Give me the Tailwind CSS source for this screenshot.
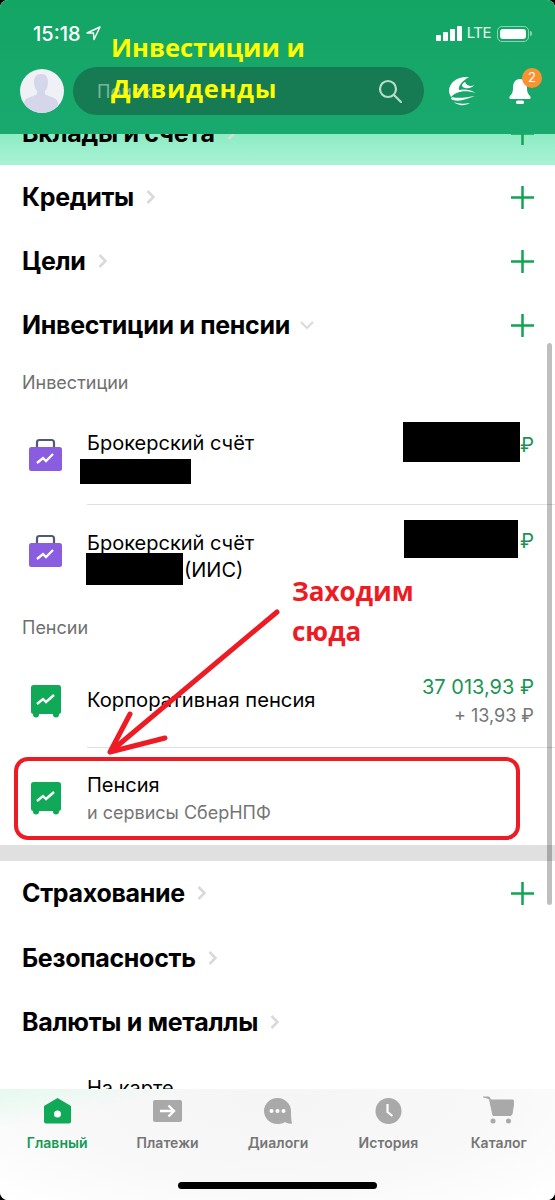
<!DOCTYPE html>
<html lang="ru">
  <head>
    <meta charset="UTF-8" />
    <meta name="viewport" content="width=device-width, initial-scale=1.0" />
    <script src="https://cdn.jsdelivr.net/npm/@tailwindcss/browser@4"></script>
    <title>Инвестиции и пенсии</title>
  </head>
  <body class="bg-black font-[Inter,sans-serif]">
    <main class="relative w-[555px] h-[1200px] overflow-hidden rounded-[8px] bg-white text-black">
      <!-- header -->
      <header class="h-[134px] bg-gradient-to-b from-[#13a564] to-[#19a96f] px-[20px] relative z-10">
        <div class="flex items-center h-[67px]">
          <span class="text-white text-[20px] ml-[13px] font-medium">15:18</span>
          <svg class="ml-[5px]" width="15" height="15" viewBox="0 0 15 15" fill="none" stroke="#fff" stroke-width="1.4" stroke-linejoin="round"><path d="M14 1 1 7h6.500L8 13.500z" /></svg>
          <div class="ml-auto flex items-center">
            <div class="flex items-end gap-[2px] h-[15px]">
              <i class="block w-[5px] h-[6px] rounded-[1px] bg-white"></i>
              <i class="block w-[5px] h-[9px] rounded-[1px] bg-white"></i>
              <i class="block w-[5px] h-[12px] rounded-[1px] bg-white"></i>
              <i class="block w-[5px] h-[15px] rounded-[1px] bg-white"></i>
            </div>
            <span class="text-white/90 text-[15px] ml-[5px] tracking-[-0.5px]">LTE</span>
            <div class="ml-[6px] w-[32px] h-[16px] border border-white/50 rounded-[5px] p-[2px]">
              <div class="w-full h-full bg-white rounded-[3px]"></div>
            </div>
            <i class="block w-[2px] h-[5px] ml-[1px] mr-[3px] rounded-r bg-white/50"></i>
          </div>
        </div>
        <div class="flex items-center h-[48px]">
          <div class="w-[44px] h-[44px] rounded-full bg-[#f0f0f7] overflow-hidden shrink-0">
            <svg width="44" height="44" viewBox="0 0 44 44" fill="#d6d6eb"><path d="M21 5c-5 0-7 3-7 8 0 4 1 7 3 9v3c-2 2-8 3-11 5-2 2-3 6-3 14h36c0-8-1-12-3-14-3-2-9-3-11-5v-3c2-2 3-5 3-9 0-5-2-8-7-8z" /></svg>
          </div>
          <div class="ml-[9px] w-[351px] h-[48px] rounded-full bg-[#167b53] flex items-center pl-[24px] pr-[22px]">
            <span class="text-white/45 text-[18px]">Поиск</span>
            <svg class="ml-auto" width="24" height="24" viewBox="0 0 24 24" fill="none" stroke="#b9dccd" stroke-width="2.200" stroke-linecap="round"><circle cx="10" cy="10" r="8" /><path d="m16 16 7 7" /></svg>
          </div>
          <svg class="ml-[24px]" width="28" height="30" viewBox="0 0 28 30" fill="#fff"><path d="M21 1C10 0 1 6 1 15c0 2 1 4 2 6 4-5 13-8 25-4-6-4-13-4-17-3-1-4 3-9 10-13z" /><path d="M17 6c-4 2-4 5 0 6s8-1 9-3c-3 2-7 1-9-3z" /><path d="M3 23c5 3 11 2 24-3-7 1-17 3-23 1z" /><path d="M6 26c4 4 11 4 16 1-6 1-12 1-16-1z" /></svg>
          <svg class="ml-[32px]" width="24" height="26" viewBox="0 0 24 26" fill="#fff"><path d="M12 1c-5 0-7 4-7 9 0 4-1 6-3 8-1 1-1 3 1 3h18c2 0 2-2 1-3-2-2-3-4-3-8 0-5-2-9-7-9z" /><rect x="8" y="22.500" width="8" height="3.500" rx="1.500" /></svg>
        </div>
        <span class="absolute left-[522px] top-[68px] w-[20px] h-[20px] rounded-full bg-[#fb9231] text-white text-[13px] flex items-center justify-center">2</span>
      </header>

      <!-- first row slides under the header -->
      <div class="h-[31px] overflow-hidden bg-gradient-to-b from-[#8decc4] to-[#a9f2d5]">
        <div class="-mt-[33px] h-[64px] flex items-center pl-[22px] pr-[21px]">
          <h2 class="pt-[2px] font-bold text-[25px] tracking-[-0.3px]">Вклады и счета</h2>
          <svg class="ml-[12px]" width="10" height="16" viewBox="0 0 10 16" fill="none" stroke="#d9d9d9" stroke-width="2.500"><path d="m1.500 2 6 6-6 6" /></svg>
          <svg class="ml-auto" width="23" height="23" viewBox="0 0 23 23" stroke="#11a453" stroke-width="2.500"><path d="M0 11.500h23M11.500 0v23" /></svg>
        </div>
      </div>

      <section>
        <div class="h-[64px] flex items-center pl-[22px] pr-[21px]">
          <h2 class="pt-[2px] font-bold text-[25px] tracking-[-0.3px]">Кредиты</h2>
          <svg class="ml-[12px]" width="10" height="16" viewBox="0 0 10 16" fill="none" stroke="#d9d9d9" stroke-width="2.500"><path d="m1.500 2 6 6-6 6" /></svg>
          <svg class="ml-auto" width="23" height="23" viewBox="0 0 23 23" stroke="#11a453" stroke-width="2.500"><path d="M0 11.500h23M11.500 0v23" /></svg>
        </div>
        <div class="h-[64px] flex items-center pl-[22px] pr-[21px]">
          <h2 class="pt-[2px] font-bold text-[25px] tracking-[-0.3px]">Цели</h2>
          <svg class="ml-[12px]" width="10" height="16" viewBox="0 0 10 16" fill="none" stroke="#d9d9d9" stroke-width="2.500"><path d="m1.500 2 6 6-6 6" /></svg>
          <svg class="ml-auto" width="23" height="23" viewBox="0 0 23 23" stroke="#11a453" stroke-width="2.500"><path d="M0 11.500h23M11.500 0v23" /></svg>
        </div>
        <div class="h-[64px] flex items-center pl-[22px] pr-[21px]">
          <h2 class="pt-[2px] font-bold text-[25px] tracking-[-0.3px]">Инвестиции и пенсии</h2>
          <svg class="ml-[9px]" width="16" height="10" viewBox="0 0 16 10" fill="none" stroke="#d9d9d9" stroke-width="2"><path d="m2 2 6 6 6-6" /></svg>
          <svg class="ml-auto" width="23" height="23" viewBox="0 0 23 23" stroke="#11a453" stroke-width="2.500"><path d="M0 11.500h23M11.500 0v23" /></svg>
        </div>
      </section>

      <!-- investments -->
      <p class="pl-[22px] pt-[14px] h-[54px] text-[18px] leading-[24px] text-[#6f6f6f]">Инвестиции</p>

      <div class="relative h-[93px]">
        <svg class="absolute left-[29px] top-[27px]" width="33" height="33" viewBox="0 0 33 33"><path d="M8 9V4.500Q8 2 10.500 2h12Q25 2 25 4.500V9" fill="none" stroke="#4c5b70" stroke-width="2.200" /><rect y="9" width="33" height="24" rx="2.500" fill="#8a5ce0" /><path d="m8 25 6-5 3 3 7-7" fill="none" stroke="#fff" stroke-width="2.400" /></svg>
        <p class="absolute left-[87px] top-[20px] text-[20px] leading-[24px]">Брокерский счёт</p>
        <div class="absolute left-[80px] top-[48px] w-[111px] h-[25px] bg-black"></div>
        <div class="absolute left-[403px] top-[11px] w-[117px] h-[40px] bg-black"></div>
        <span class="absolute right-[21px] top-[22px] text-[20px] leading-[24px] text-[#1a9455]">₽</span>
      </div>
      <div class="ml-[87px] h-px bg-[#e2e2e2]"></div>

      <div class="relative h-[94px]">
        <svg class="absolute left-[29px] top-[29px]" width="33" height="33" viewBox="0 0 33 33"><path d="M8 9V4.500Q8 2 10.500 2h12Q25 2 25 4.500V9" fill="none" stroke="#4c5b70" stroke-width="2.200" /><rect y="9" width="33" height="24" rx="2.500" fill="#8a5ce0" /><path d="m8 25 6-5 3 3 7-7" fill="none" stroke="#fff" stroke-width="2.400" /></svg>
        <p class="absolute left-[87px] top-[26px] text-[20px] leading-[24px]">Брокерский счёт</p>
        <div class="absolute left-[86px] top-[48px] w-[97px] h-[32px] bg-black"></div>
        <span class="absolute left-[184px] top-[53px] text-[20px] leading-[24px]">(ИИС)</span>
        <div class="absolute left-[404px] top-[15px] w-[114px] h-[38px] bg-black"></div>
        <span class="absolute right-[21px] top-[24px] text-[20px] leading-[24px] text-[#1a9455]">₽</span>
      </div>

      <!-- pensions -->
      <p class="pl-[22px] pt-[17px] h-[53px] text-[18px] leading-[24px] text-[#6f6f6f]">Пенсии</p>

      <div class="relative h-[95px]">
        <svg class="absolute left-[31px] top-[33px]" width="30" height="33" viewBox="0 0 30 33"><rect width="30" height="29" rx="2.500" fill="#0fa958" /><circle cx="5" cy="29.500" r="3" fill="#0fa958" /><circle cx="25" cy="29.500" r="3" fill="#0fa958" /><path d="m6 19 6-5 3 3 8-7" fill="none" stroke="#fff" stroke-width="2.400" /></svg>
        <p class="absolute left-[87px] top-[36px] text-[20.200px] leading-[24px]">Корпоративная пенсия</p>
        <p class="absolute right-[21px] top-[23px] text-[20px] leading-[24px] text-[#1a9455]">37 013,93 ₽</p>
        <p class="absolute right-[21px] top-[54px] text-[18px] leading-[20px] text-[#757575]">+ 13,93 ₽</p>
      </div>
      <div class="ml-[87px] h-px bg-[#e2e2e2]"></div>

      <div class="relative h-[97px]">
        <svg class="absolute left-[31px] top-[34px]" width="30" height="33" viewBox="0 0 30 33"><rect width="30" height="29" rx="2.500" fill="#0fa958" /><circle cx="5" cy="29.500" r="3" fill="#0fa958" /><circle cx="25" cy="29.500" r="3" fill="#0fa958" /><path d="m6 19 6-5 3 3 8-7" fill="none" stroke="#fff" stroke-width="2.400" /></svg>
        <p class="absolute left-[87px] top-[25px] text-[20px] leading-[24px]">Пенсия</p>
        <p class="absolute left-[87px] top-[55px] text-[18px] leading-[20px] text-[#757575]">и сервисы СберНПФ</p>
      </div>

      <div class="h-[16px] bg-[#e0e0e0]"></div>

      <section>
        <div class="h-[64px] flex items-center pl-[22px] pr-[21px]">
          <h2 class="pt-[2px] font-bold text-[25px] tracking-[-0.3px]">Страхование</h2>
          <svg class="ml-[12px]" width="10" height="16" viewBox="0 0 10 16" fill="none" stroke="#d9d9d9" stroke-width="2.500"><path d="m1.500 2 6 6-6 6" /></svg>
          <svg class="ml-auto" width="23" height="23" viewBox="0 0 23 23" stroke="#11a453" stroke-width="2.500"><path d="M0 11.500h23M11.500 0v23" /></svg>
        </div>
        <div class="h-[65px] flex items-center pl-[22px] pr-[21px]">
          <h2 class="pt-[2px] font-bold text-[25px] tracking-[-0.3px]">Безопасность</h2>
          <svg class="ml-[12px]" width="10" height="16" viewBox="0 0 10 16" fill="none" stroke="#d9d9d9" stroke-width="2.500"><path d="m1.500 2 6 6-6 6" /></svg>
        </div>
        <div class="h-[64px] flex items-center pl-[22px] pr-[21px]">
          <h2 class="pt-[2px] font-bold text-[25px] tracking-[-0.3px]">Валюты и металлы</h2>
          <svg class="ml-[12px]" width="10" height="16" viewBox="0 0 10 16" fill="none" stroke="#d9d9d9" stroke-width="2.500"><path d="m1.500 2 6 6-6 6" /></svg>
        </div>
        <p class="pl-[87px] pt-[22px] text-[20px] leading-[24px]">На карте</p>
      </section>

      <!-- tab bar -->
      <nav class="absolute left-0 right-0 bottom-0 h-[111px] pt-[9px] bg-[radial-gradient(ellipse_at_50%_10%,#f5f5f5_0%,#f8f8f8_55%,#ffffff_100%)]">
        <div class="absolute inset-0 bg-gradient-to-br from-[#e4f9ef] via-transparent via-[18%] to-transparent"></div>
        <div class="relative grid grid-cols-5 w-[552px] ml-[2px] text-[14px] font-semibold tracking-[0.05px] text-[#757575]">
          <a class="flex flex-col items-center text-[#159a55]">
            <svg width="27" height="26" viewBox="0 0 27 26"><path d="M13.500 0 27 8v15.500a2 2 0 0 1-2 2H2a2 2 0 0 1-2-2V8z" fill="#0fa958" /><circle cx="13.500" cy="16" r="3.500" fill="#fff" /></svg>
            <span class="mt-[10px] leading-[18px]">Главный</span>
          </a>
          <a class="flex flex-col items-center">
            <svg class="mt-[1px]" width="29" height="25" viewBox="0 0 29 25"><rect y="1" width="29" height="22" rx="2" fill="#a9a9a9" /><path d="M7 12h14m-5.500-5.500L21 12l-5.500 5.500" fill="none" stroke="#fff" stroke-width="2.400" /></svg>
            <span class="mt-[10px] leading-[18px]">Платежи</span>
          </a>
          <a class="flex flex-col items-center">
            <svg width="28" height="26" viewBox="0 0 28 26"><path d="M13.500 0C21 0 27 6 27 13c0 4 0 8 1 12.500-2 .5-5 0-7-1.500-2 1.500-5 2-7.500 2C6 26 0 20 0 13S6 0 13.500 0z" fill="#a9a9a9" /><circle cx="7.500" cy="13" r="2" fill="#fff" /><circle cx="13.500" cy="13" r="2" fill="#fff" /><circle cx="19.500" cy="13" r="2" fill="#fff" /></svg>
            <span class="mt-[10px] leading-[18px]">Диалоги</span>
          </a>
          <a class="flex flex-col items-center">
            <svg width="27" height="26" viewBox="0 0 27 26"><circle cx="13.500" cy="13" r="13" fill="#a9a9a9" /><path d="M12.500 6v8l5 4" fill="none" stroke="#fff" stroke-width="2.200" /></svg>
            <span class="mt-[10px] leading-[18px]">История</span>
          </a>
          <a class="flex flex-col items-center">
            <svg width="31" height="28" viewBox="0 0 31 28" class="-mt-[2px]"><path d="M0 1h6l2 3v0h21.500a1.500 1.500 0 0 1 1.500 1.500L29 18a2 2 0 0 1-2 1.500H10L6.500 3.500" fill="#a9a9a9" stroke="#a9a9a9" stroke-width="1" /><circle cx="10" cy="25" r="2.500" fill="#a9a9a9" /><circle cx="25.500" cy="25" r="2.500" fill="#a9a9a9" /></svg>
            <span class="mt-[10px] leading-[18px]">Каталог</span>
          </a>
        </div>
        <div class="absolute left-[178px] top-[93px] w-[199px] h-[7px] rounded-full bg-black"></div>
      </nav>

      <!-- scrollbar -->
      <div class="absolute left-[547px] top-[343px] w-[5px] h-[562px] rounded-full bg-black/25"></div>

      <!-- annotations drawn on top of the screenshot -->
      <div class="absolute left-[111px] top-[27px] z-20 font-['Open_Sans',sans-serif] font-bold text-[25.500px] leading-[41px] text-[#ffff00]">Инвестиции и<br /><span class="tracking-[0.7px]">Дивиденды</span></div>
      <div class="absolute left-[292px] top-[571px] font-['Open_Sans',sans-serif] font-bold text-[26px] leading-[40px] text-[#ed1c24]">Заходим<br />сюда</div>
      <div class="absolute left-[14px] top-[757px] w-[506px] h-[83px] border-4 border-[#ed1c24] rounded-[14px]"></div>
      <svg class="absolute left-0 top-0 pointer-events-none" width="555" height="800" fill="none" stroke="#ed1c24" stroke-width="5" stroke-linecap="round" stroke-linejoin="round"><path d="M277 612 110 752M130 714 110 752 165 738" /></svg>
    </main>
  </body>
</html>
